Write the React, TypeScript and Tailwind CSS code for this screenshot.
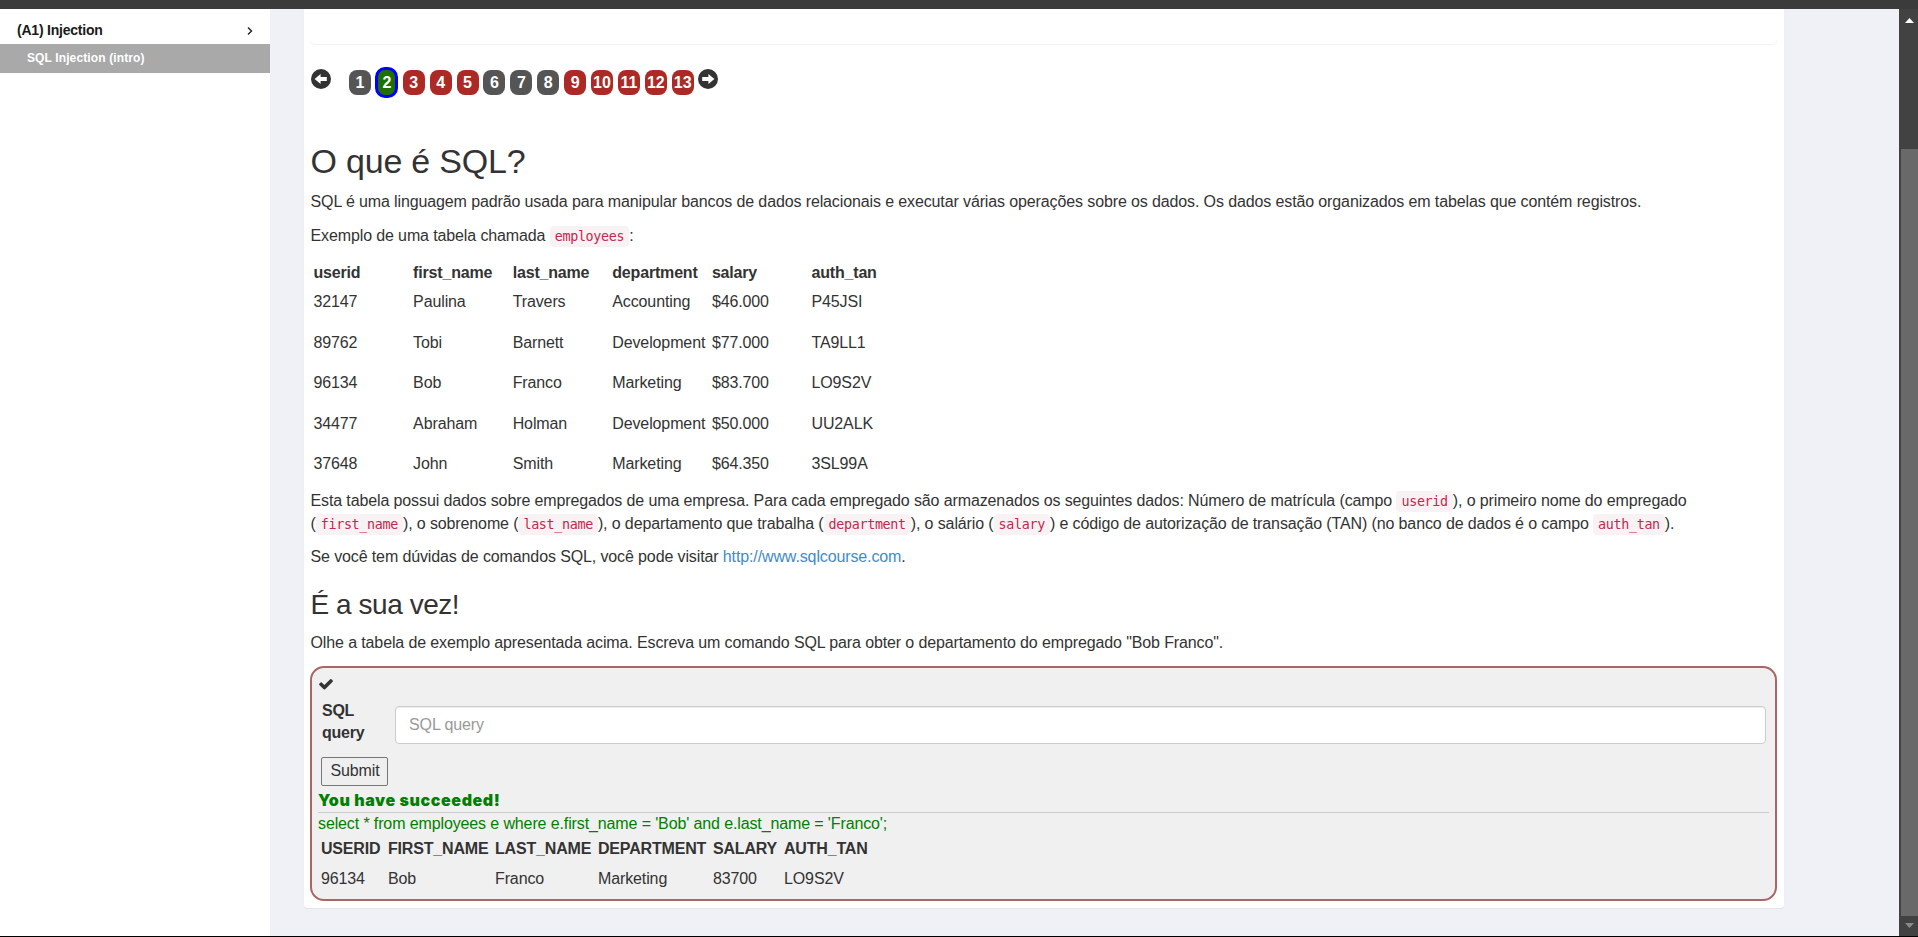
import React from "react";

const pages: [number, string][] = [
  [1, "h-[25px] w-[22px] rounded-[8px] bg-[#555555]"],
  [2, "-mx-[0.5px] h-[31px] w-[23px] rounded-[10px] border-3 border-[#0000ff] bg-[#207000]"],
  [3, "h-[25px] w-[22px] rounded-[8px] bg-[#ac2925]"],
  [4, "h-[25px] w-[22px] rounded-[8px] bg-[#ac2925]"],
  [5, "h-[25px] w-[22px] rounded-[8px] bg-[#ac2925]"],
  [6, "h-[25px] w-[22px] rounded-[8px] bg-[#555555]"],
  [7, "h-[25px] w-[22px] rounded-[8px] bg-[#555555]"],
  [8, "h-[25px] w-[22px] rounded-[8px] bg-[#555555]"],
  [9, "h-[25px] w-[22px] rounded-[8px] bg-[#ac2925]"],
  [10, "h-[25px] w-[22px] rounded-[8px] bg-[#ac2925]"],
  [11, "h-[25px] w-[22px] rounded-[8px] bg-[#ac2925]"],
  [12, "h-[25px] w-[22px] rounded-[8px] bg-[#ac2925]"],
  [13, "h-[25px] w-[22px] rounded-[8px] bg-[#ac2925]"],
];

const headers = ["userid", "first_name", "last_name", "department", "salary", "auth_tan"];
const employees = [
  ["32147", "Paulina", "Travers", "Accounting", "$46.000", "P45JSI"],
  ["89762", "Tobi", "Barnett", "Development", "$77.000", "TA9LL1"],
  ["96134", "Bob", "Franco", "Marketing", "$83.700", "LO9S2V"],
  ["34477", "Abraham", "Holman", "Development", "$50.000", "UU2ALK"],
  ["37648", "John", "Smith", "Marketing", "$64.350", "3SL99A"],
];
const resultHeaders = ["USERID", "FIRST_NAME", "LAST_NAME", "DEPARTMENT", "SALARY", "AUTH_TAN"];
const result = ["96134", "Bob", "Franco", "Marketing", "83700", "LO9S2V"];

function Code({ children }: { children: React.ReactNode }) {
  return (
    <code className="rounded-[4px] bg-[#f9f2f4] px-[5px] py-[3px] font-['DejaVu_Sans_Mono',monospace] text-[13.4px] leading-none tracking-[-0.34px] text-[#c7254e]">
      {children}
    </code>
  );
}

function Arrow({ right = false }: { right?: boolean }) {
  return (
    <svg viewBox="0 0 20 20" className={right ? "size-5 rotate-180" : "size-5"}>
      <circle cx="10" cy="10" r="10" fill="#333" />
      <path d="M3.6 10 9.6 4.9V8H15.8V12H9.6V15.1Z" fill="#fff" />
    </svg>
  );
}

export default function App() {
  return (
    <div className="flex h-[937px] w-[1918px] flex-col overflow-hidden border-b border-black bg-[#f0f1f7] font-['Liberation_Sans',Arial,sans-serif] text-[16px] leading-[23px] tracking-[-0.12px] text-[#333]">
      <div className="h-[9px] shrink-0 bg-[#3b3b3b]" />
      <div className="flex min-h-0 flex-1">
        <aside className="w-[270px] shrink-0 bg-white">
          <div className="flex h-[35px] items-center justify-between pt-[7px] pr-[17px] pl-[17px] font-bold text-[#1a1a1a]">
            <span className="text-[14px] tracking-[-0.22px]">(A1) Injection</span>
            <svg viewBox="0 0 6 8" className="mt-[2px] h-2 w-1.5" fill="none" stroke="#222" strokeWidth="1.4">
              <path d="M1 .6 4.5 4 1 7.4" />
            </svg>
          </div>
          <div className="h-[29px] bg-[#a9a9a9] pl-[27px] text-[12px] leading-[28px] font-bold tracking-[0.12px] text-white">
            SQL Injection (intro)
          </div>
        </aside>

        <div className="flex-1 pl-[34px]">
          <main className="h-[899px] w-[1480px] rounded-b-[4px] bg-white pr-[7px] pl-[6.5px] shadow-[0_1px_1px_rgba(0,0,0,0.06)]">
            <div className="-ml-[0.5px] h-[35px] rounded-b-[5px] shadow-[0_1px_1px_rgba(0,0,0,0.06)]" />
            <nav className="mt-[26px] flex h-[25px] items-center">
              <div className="mt-[-7px] mr-[18.5px]">
                <Arrow />
              </div>
              <div className="flex items-center gap-[4.9px]">
                {pages.map(([n, cls]) => (
                  <div key={n} className={`flex shrink-0 items-center justify-center font-bold tracking-normal text-white ${cls}`}>
                    {n}
                  </div>
                ))}
              </div>
              <div className="mt-[-7px] ml-[4px]">
                <Arrow right />
              </div>
            </nav>

            <h1 className="mt-[46px] text-[34px] leading-[40px] tracking-[-0.2px]">O que é SQL?</h1>
            <p className="mt-[9px]">
              SQL é uma linguagem padrão usada para manipular bancos de dados relacionais e executar várias operações sobre os dados. Os dados estão organizados em tabelas que contém registros.
            </p>
            <p className="mt-[11px]">
              Exemplo de uma tabela chamada <Code>employees</Code>:
            </p>

            <div className="mt-[14px] w-[597px] pl-[3px]">
              <div className="grid grid-cols-[repeat(6,99.6px)] font-bold tracking-[-0.18px]">
                {headers.map((h) => (
                  <span key={h}>{h}</span>
                ))}
              </div>
              <div className="mt-[6px] flex flex-col gap-[17.5px]">
                {employees.map((row) => (
                  <div key={row[0]} className="grid grid-cols-[repeat(6,99.6px)]">
                    {row.map((cell) => (
                      <span key={cell}>{cell}</span>
                    ))}
                  </div>
                ))}
              </div>
            </div>

            <p className="mt-[13.5px]">
              Esta tabela possui dados sobre empregados de uma empresa. Para cada empregado são armazenados os seguintes dados: Número de matrícula (campo <Code>userid</Code>), o primeiro nome do empregado
              <br />(<Code>first_name</Code>), o sobrenome (<Code>last_name</Code>), o departamento que trabalha (<Code>department</Code>), o salário (<Code>salary</Code>) e código de autorização de transação (TAN) (no banco de dados é o campo <Code>auth_tan</Code>).
            </p>
            <p className="mt-[10px]">
              Se você tem dúvidas de comandos SQL, você pode visitar <a className="text-[#428bca]">http://www.sqlcourse.com</a>.
            </p>
            <h2 className="mt-[21px] text-[28px] leading-[31px] tracking-[-0.45px]">É a sua vez!</h2>
            <p className="mt-[11px]">
              Olhe a tabela de exemplo apresentada acima. Escreva um comando SQL para obter o departamento do empregado "Bob Franco".
            </p>

            <section className="mt-[12px] -ml-[0.5px] h-[235px] rounded-[14px] border-2 border-[#aa6666] bg-[#f0f0f0] px-[6px]">
              <div className="h-[30px] pt-[8px]">
                <svg viewBox="0 0 1792 1792" className="size-4" fill="#333">
                  <path d="M1671 566q0 40-28 68l-724 724-136 136q-28 28-68 28t-68-28l-136-136-362-362q-28-28-28-68t28-68l136-136q28-28 68-28t68 28l294 295 656-657q28-28 68-28t68 28l136 136q28 28 28 68z" />
                </svg>
              </div>
              <div className="flex h-[50px] pl-[4px]">
                <label className="w-[73px] pt-[2px] leading-[22.5px] font-bold tracking-[-0.25px]">
                  SQL
                  <br />
                  query
                </label>
                <input
                  placeholder="SQL query"
                  className="mt-[8px] h-[38px] w-[1371px] rounded-[4px] border border-[#ccc] bg-white px-[13px] shadow-[inset_0_1px_1px_rgba(0,0,0,0.075)] placeholder:text-[#999]"
                />
              </div>
              <button className="mt-[9px] ml-[3px] block h-[29px] w-[67px] rounded-[2px] border border-[#767676] bg-[#efefef] pb-[2px] pl-px">
                Submit
              </button>
              <div className="mt-[2px] h-[25px] border-b border-[#ccc] font-[Inter,sans-serif] text-[16px] leading-[25px] font-black tracking-[0.6px] text-[#008000]">
                You have succeeded!
              </div>
              <div className="leading-[22px] text-[#008000]">
                select * from employees e where e.first_name = 'Bob' and e.last_name = 'Franco';
              </div>
              <div className="mt-[2px] grid grid-cols-[67px_107px_103px_115px_71px_90px] gap-y-[7px] pl-[3px]">
                {resultHeaders.map((h) => (
                  <b key={h} className="tracking-[-0.18px]">{h}</b>
                ))}
                {result.map((r) => (
                  <span key={r}>{r}</span>
                ))}
              </div>
            </section>
          </main>
        </div>

        <div className="flex w-[19px] shrink-0 flex-col items-end bg-[#424242]">
          <svg viewBox="0 0 17 140" className="h-[140px] w-[17px]">
            <path d="M4 14 8.5 9 13 14Z" fill="#fff" />
          </svg>
          <div className="h-[767px] w-[17px] bg-[#696969]" />
          <svg viewBox="0 0 17 20" className="h-[20px] w-[17px]">
            <path d="M4 7 8.5 12 13 7Z" fill="#8a8a8a" />
          </svg>
        </div>
      </div>
    </div>
  );
}
